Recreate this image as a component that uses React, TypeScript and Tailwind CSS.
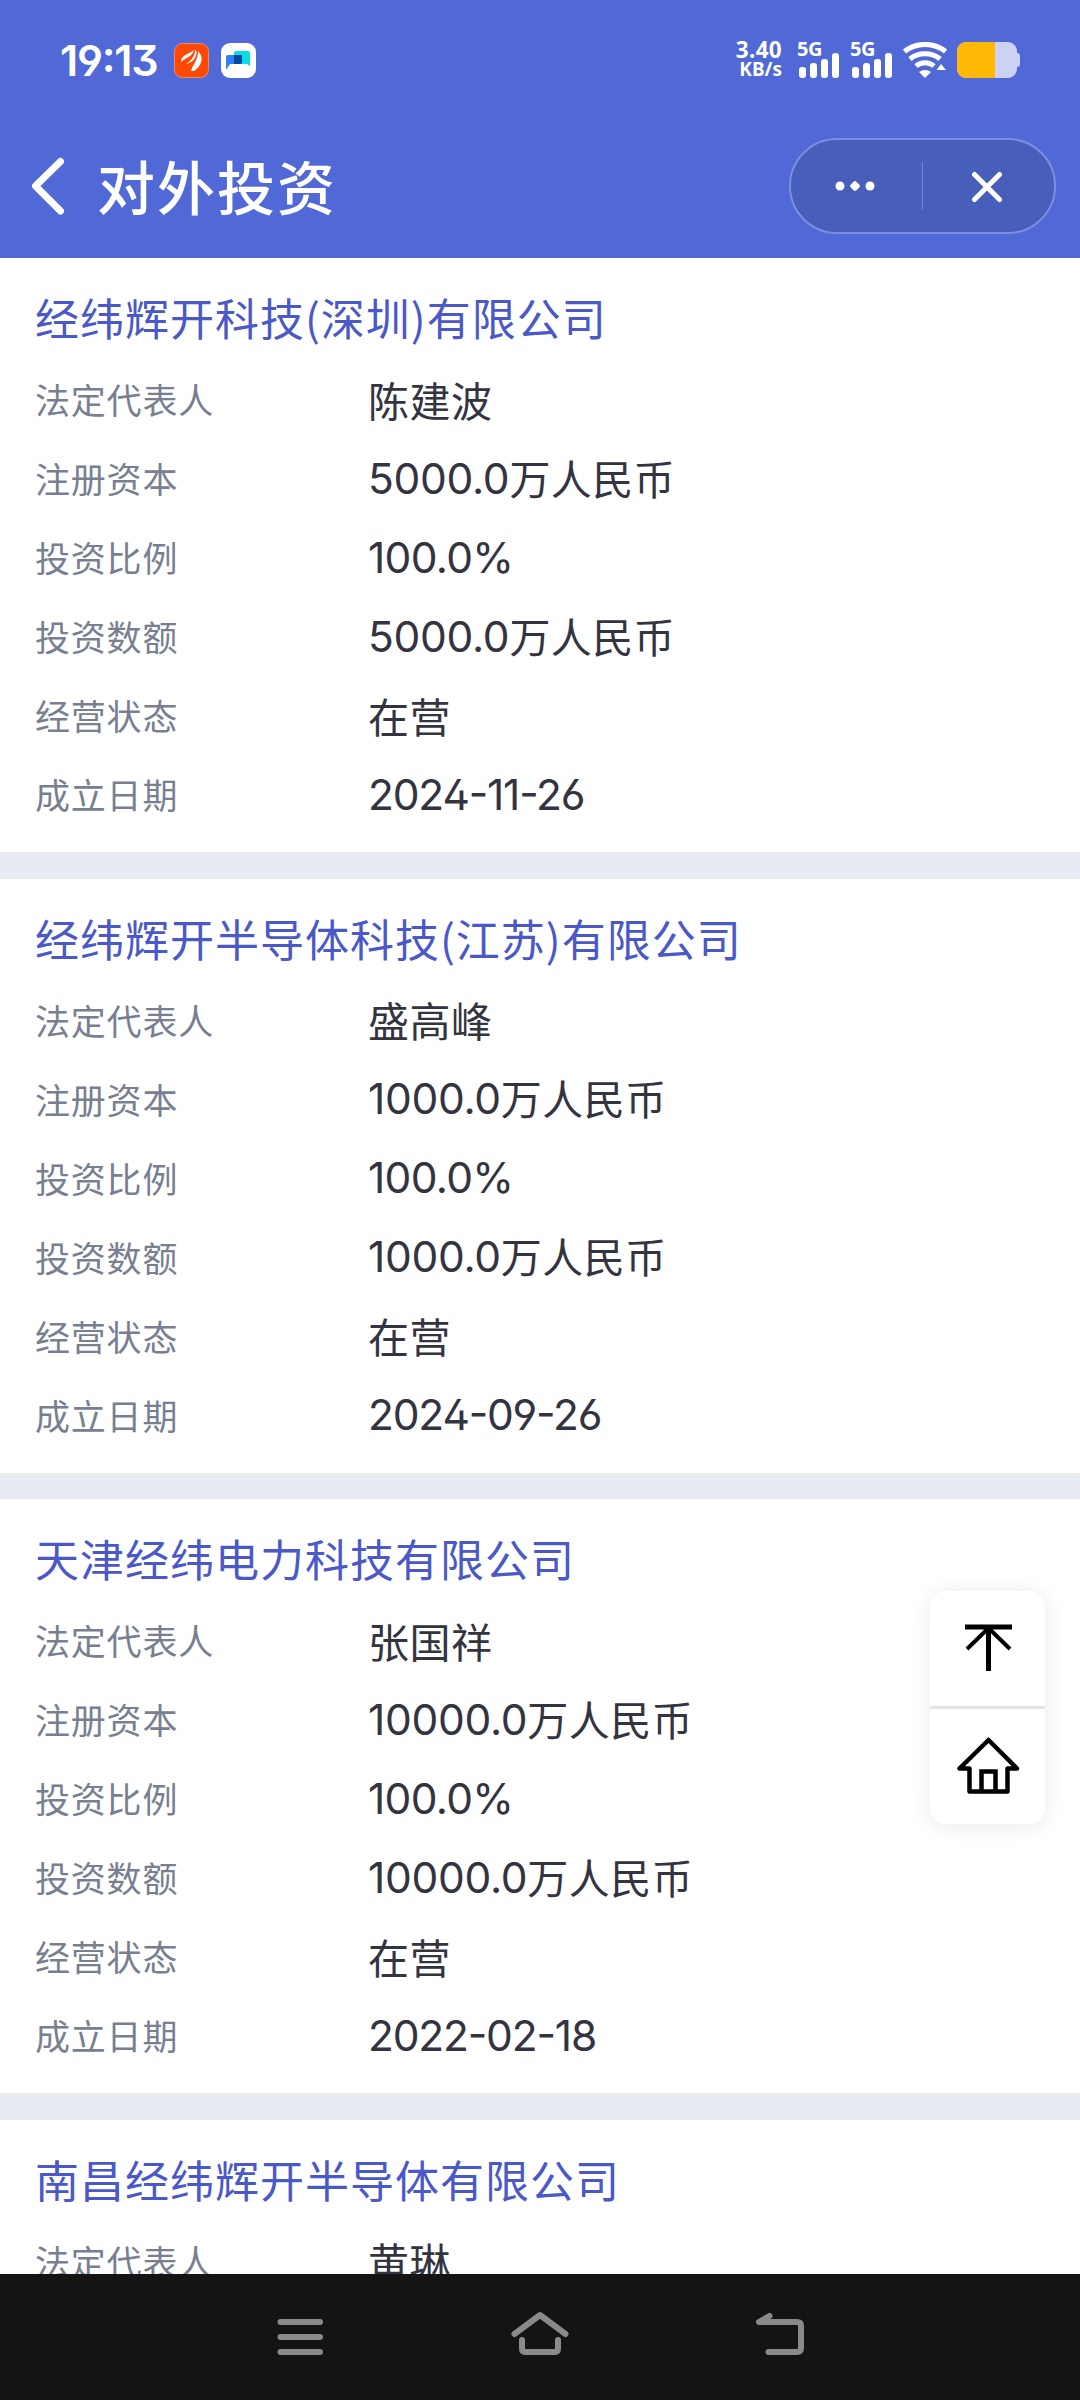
import { ReactNode } from "react";

type Company = {
    name: string;
    person: string;
    capital: string;
    date: string;
};

const companies: Company[] = [
    { name: "经纬辉开科技(深圳)有限公司", person: "陈建波", capital: "5000.0", date: "2024-11-26" },
    { name: "经纬辉开半导体科技(江苏)有限公司", person: "盛高峰", capital: "1000.0", date: "2024-09-26" },
    { name: "天津经纬电力科技有限公司", person: "张国祥", capital: "10000.0", date: "2022-02-18" },
    { name: "南昌经纬辉开半导体有限公司", person: "黄琳", capital: "", date: "" },
];

function Signal() {
    return (
        <div className="flex flex-col w-[42px] mr-[11px]">
            <div className="font-['Noto_Sans'] font-bold text-[20px] leading-[13px] h-[11px] tracking-[-0.5px]">5G</div>
            <svg width="42" height="25" viewBox="0 0 42 25" fill="#fff">
                <rect x="2" y="14" width="7" height="11" rx="3" />
                <rect x="13" y="10" width="7" height="15" rx="3" />
                <rect x="24" y="6" width="7" height="19" rx="3" />
                <rect x="35" y="0" width="7" height="25" rx="3" />
            </svg>
        </div>
    );
}

function StatusBar() {
    return (
        <div className="h-[120px] pl-[60px] pr-[60px] flex items-center text-white">
            <div className="w-[114px] font-['Inter'] font-semibold text-[43px] leading-[44px] tracking-[-1.2px] [font-feature-settings:'ss01','case']">19:13</div>
            <svg width="35" height="35" viewBox="0 0 35 35">
                <rect x="0.5" y="0.5" width="34" height="34" rx="8" fill="#fc4a06" stroke="#f28a6a" />
                <path d="M7 19 C7 12 13 12 20 7 C18 14 13 14 7 19Z" fill="#fff" />
                <path d="M12 21 C17 18 21 13 21.500 6 C25 12 19 20 12 21Z" fill="#fff" />
                <path d="M17 28 C19 21 24 17 24 8 C31 15 27 23 20 28Z" fill="#fff" />
            </svg>
            <svg className="ml-3" width="35" height="35" viewBox="0 0 35 35">
                <rect width="35" height="35" rx="9" fill="#fff" />
                <path d="M13 10a2 2 0 0 1 2-2h12a2 2 0 0 1 2 2v13l-3-2H13z" fill="#0edce0" />
                <path d="M5 14a2 2 0 0 1 2-2h14v7a2 2 0 0 1-2 2H9l-4 6z" fill="#2e80f6" />
                <path d="M13 12h8v7a2 2 0 0 1-2 2h-6z" fill="#05479c" />
            </svg>
            <div className="ml-auto mr-[15px] w-[50px] flex flex-col items-end font-['Noto_Sans'] font-bold">
                <div className="text-[22.500px] leading-[19px] tracking-[0.3px]">3.40</div>
                <div className="text-[19px] leading-[21px]">KB/s</div>
            </div>
            <Signal />
            <Signal />
            <svg width="44" height="36" viewBox="0 0 44 36" fill="none" stroke="#fff" strokeWidth="5">
                <path d="M1.5 9.5 C13 0 31 0 42.5 9.5" />
                <path d="M7 17 C15 10 29 10 37 17" />
                <path d="M13 24 C18 19.5 26 19.5 31 24" />
                <path d="M16 30 Q22 26 28 30 L22 36Z" fill="#fff" stroke="none" />
                <path d="M33.500 28 L38 22 L43 28Z" fill="#fff" stroke="none" />
            </svg>
            <div className="ml-[10px] flex items-center">
                <div className="w-[60px] h-9 rounded-[9px] overflow-hidden flex bg-[#cdd2f4]">
                    <div className="w-[38px] bg-[#ffb905]"></div>
                </div>
                <div className="w-[3px] h-[14px] rounded-r-sm bg-[#cdd2f4]"></div>
            </div>
        </div>
    );
}

function TitleBar() {
    return (
        <div className="h-[138px] pl-[31px] pr-6 flex items-start text-white">
            <svg className="mt-[37px]" width="36" height="60" viewBox="0 0 36 60" fill="none" stroke="#fff" strokeWidth="7" strokeLinecap="round" strokeLinejoin="round">
                <path d="M29.500 4.500 L4.500 29 L29.500 54" />
            </svg>
            <div className="ml-[30px] mt-[23px] text-[58px] leading-[84px] font-medium tracking-[2px]">对外投资</div>
            <div className="ml-auto mt-[18px] w-[267px] h-24 rounded-full border-2 border-[#7d8de0] bg-[#485ebb] flex items-center">
                <div className="flex-1 pr-[3px] flex items-center justify-center">
                    <svg width="40" height="12" viewBox="0 0 40 12" fill="#fff">
                        <circle cx="5" cy="6" r="4.500" />
                        <rect x="16" y="2" width="8" height="8" rx="2" transform="rotate(45 20 6)" />
                        <circle cx="35" cy="6" r="4.500" />
                    </svg>
                </div>
                <div className="w-px h-12 bg-[#7484d4]"></div>
                <div className="flex-1 pr-[3px] pt-[2px] flex items-center justify-center">
                    <svg width="32" height="32" viewBox="0 0 32 32" stroke="#fff" strokeWidth="5" strokeLinecap="round">
                        <path d="M3.500 3.500 L28.500 28.500 M28.500 3.500 L3.500 28.500" />
                    </svg>
                </div>
            </div>
        </div>
    );
}

function Row({ label, children }: { label: string; children: ReactNode }) {
    return (
        <div className="h-[79px] flex items-center">
            <div className="w-[333px] text-[35px] leading-[79px] tracking-[0.8px] text-[#777f91]">{label}</div>
            <div className="flex text-[41px] leading-[78px] tracking-[0.5px] text-[#33343f]">{children}</div>
        </div>
    );
}

function Capital({ value }: { value: string }) {
    return (
        <>
            <span className="pt-[2px] font-['Inter'] text-[42.500px] tracking-[-0.3px] [font-feature-settings:'ss01']">{value}</span>
            万人民币
        </>
    );
}

function CompanyCard({ company }: { company: Company }) {
    return (
        <div className="pl-[35px] pt-[18px] h-[597px] bg-white border-b-[3px] border-[#ebecee] shrink-0">
            <div className="h-[83px] leading-[82px] text-[44px] tracking-[1px] text-[#4a58c8]">{company.name}</div>
            <Row label="法定代表人">{company.person}</Row>
            {company.capital && (
                <>
                    <Row label="注册资本"><Capital value={company.capital} /></Row>
                    <Row label="投资比例">
                        <span className="pt-[2px] font-['Inter'] text-[42.500px] tracking-[-0.7px] [font-feature-settings:'ss01']">100.0%</span>
                    </Row>
                    <Row label="投资数额"><Capital value={company.capital} /></Row>
                    <Row label="经营状态">在营</Row>
                    <Row label="成立日期">
                        <span className="pt-[2px] font-['Inter'] text-[42.500px] tracking-[-1.200px] [font-feature-settings:'ss01','case']">{company.date}</span>
                    </Row>
                </>
            )}
        </div>
    );
}

function FloatingMenu() {
    return (
        <div className="absolute left-[930px] top-[1591px] w-[115px] h-[233px] rounded-2xl bg-white shadow-[0_2px_22px_rgba(0,0,0,0.09)] flex flex-col">
            <div className="h-[115px] flex items-center justify-center">
                <svg width="60" height="60" viewBox="0 0 60 60" fill="none" stroke="#000">
                    <path d="M7 8 H54" strokeWidth="5" />
                    <path d="M30.500 8 V52" strokeWidth="5" />
                    <path d="M9 30 L30.500 9 L52 30" strokeWidth="4" />
                </svg>
            </div>
            <div className="h-[3px] bg-[#e4e4e4]"></div>
            <div className="h-[115px] flex items-center justify-center">
                <svg width="66" height="66" viewBox="0 0 66 66" fill="none" stroke="#000" strokeWidth="4.500" strokeLinejoin="round">
                    <path d="M33.500 6 L4.500 34.500 H14.500 V57.500 H52.500 V34.500 H62 Z" />
                    <path d="M26.500 57.500 V37.500 H40.500 V57.500" strokeLinejoin="miter" />
                </svg>
            </div>
        </div>
    );
}

function NavBar() {
    return (
        <div className="h-[126px] shrink-0 bg-[#141414] flex items-start justify-center pt-[33px] gap-[180px]">
            <svg width="60" height="60" viewBox="270 2307 60 60" stroke="#8a8a8a" strokeWidth="6" strokeLinecap="round">
                <path d="M280.500 2322 H320 M280.500 2337 H320 M280.500 2352 H320" />
            </svg>
            <svg width="60" height="60" viewBox="510 2307 60 60" fill="none" stroke="#8a8a8a" strokeWidth="6" strokeLinecap="round" strokeLinejoin="round">
                <path d="M514.500 2334 L540 2315 L565.500 2334" />
                <path d="M522 2340 V2349 Q522 2352 526 2352 H554 Q558 2352 558 2349 V2340" />
            </svg>
            <svg width="60" height="60" viewBox="750 2307 60 60" fill="none" stroke="#8a8a8a" strokeWidth="6" strokeLinecap="round" strokeLinejoin="round">
                <path d="M769.500 2316 L759 2322 H797 Q801 2322 801 2326 V2348 Q801 2352 797 2352 H768.500" />
            </svg>
        </div>
    );
}

export default function App() {
    return (
        <div className="relative w-[1080px] h-[2400px] overflow-hidden flex flex-col bg-white font-['Noto_Sans_CJK_SC',sans-serif]">
            <div className="h-[258px] shrink-0 bg-[#5069d6]">
                <StatusBar />
                <TitleBar />
            </div>
            <div className="flex-1 min-h-0 overflow-hidden flex flex-col gap-[23.500px] bg-[#e7ebf3]">
                {companies.map((company) => (
                    <CompanyCard key={company.name} company={company} />
                ))}
            </div>
            <NavBar />
            <FloatingMenu />
        </div>
    );
}
